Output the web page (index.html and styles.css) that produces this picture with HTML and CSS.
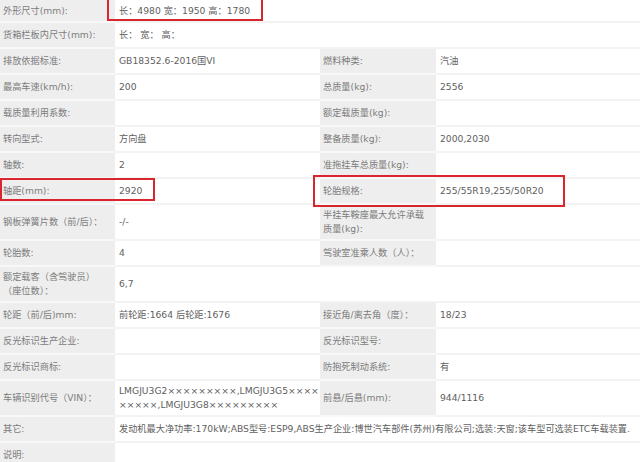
FILE: index.html
```html
<!DOCTYPE html>
<html lang="zh-CN">
<head>
  <meta charset="UTF-8">
  <meta name="viewport" content="width=device-width, initial-scale=1.0">
  <title>车辆参数</title>
  <link rel="stylesheet" href="styles.css">
</head>
<body>
  <div class="sheet">
    <table class="params">
      <colgroup>
        <col class="c-label"><col class="c-value"><col class="c-label2"><col class="c-value2">
      </colgroup>
      <tr class="first">
        <td class="label">外形尺寸(mm):</td>
        <td colspan="3">长：4980 宽：1950 高：1780</td>
      </tr>
      <tr>
        <td class="label">货箱栏板内尺寸(mm):</td>
        <td colspan="3">长： 宽： 高：</td>
      </tr>
      <tr>
        <td class="label">排放依据标准:</td>
        <td>GB18352.6-2016国VI</td>
        <td class="label">燃料种类:</td>
        <td>汽油</td>
      </tr>
      <tr>
        <td class="label">最高车速(km/h):</td>
        <td>200</td>
        <td class="label">总质量(kg):</td>
        <td>2556</td>
      </tr>
      <tr>
        <td class="label">载质量利用系数:</td>
        <td></td>
        <td class="label">额定载质量(kg):</td>
        <td></td>
      </tr>
      <tr>
        <td class="label">转向型式:</td>
        <td>方向盘</td>
        <td class="label">整备质量(kg):</td>
        <td>2000,2030</td>
      </tr>
      <tr>
        <td class="label">轴数:</td>
        <td>2</td>
        <td class="label">准拖挂车总质量(kg):</td>
        <td></td>
      </tr>
      <tr>
        <td class="label">轴距(mm):</td>
        <td>2920</td>
        <td class="label">轮胎规格:</td>
        <td>255/55R19,255/50R20</td>
      </tr>
      <tr class="tall">
        <td class="label">钢板弹簧片数（前/后）：</td>
        <td>-/-</td>
        <td class="label">半挂车鞍座最大允许承载质量(kg):</td>
        <td></td>
      </tr>
      <tr>
        <td class="label">轮胎数:</td>
        <td>4</td>
        <td class="label">驾驶室准乘人数（人）：</td>
        <td></td>
      </tr>
      <tr class="tall">
        <td class="label">额定载客（含驾驶员）<br>（座位数）：</td>
        <td colspan="3">6,7</td>
      </tr>
      <tr>
        <td class="label">轮距（前/后)mm:</td>
        <td>前轮距:1664 后轮距:1676</td>
        <td class="label">接近角/离去角（度）：</td>
        <td>18/23</td>
      </tr>
      <tr>
        <td class="label">反光标识生产企业:</td>
        <td></td>
        <td class="label">反光标识型号:</td>
        <td></td>
      </tr>
      <tr>
        <td class="label">反光标识商标:</td>
        <td></td>
        <td class="label">防抱死制动系统:</td>
        <td>有</td>
      </tr>
      <tr class="tall">
        <td class="label">车辆识别代号（VIN）：</td>
        <td class="nowrap">LMGJU3G2×××××××××,LMGJU3G5××××<br>×××××,LMGJU3G8×××××××××</td>
        <td class="label">前悬/后悬(mm):</td>
        <td>944/1116</td>
      </tr>
      <tr>
        <td class="label">其它:</td>
        <td colspan="3" class="nowrap">发动机最大净功率:170kW;ABS型号:ESP9,ABS生产企业:博世汽车部件(苏州)有限公司;选装:天窗;该车型可选装ETC车载装置.</td>
      </tr>
      <tr>
        <td class="label">说明:</td>
        <td colspan="3"></td>
      </tr>
    </table>

    <!-- red highlight boxes -->
    <div class="mark mark-size"></div>
    <div class="mark mark-wheelbase"></div>
    <div class="mark mark-tyre"></div>
  </div>
</body>
</html>
```

FILE: styles.css
```css
body {
  margin: 0;
  background: #fff;
  font-family: "DejaVu Sans", "Noto Sans CJK SC", sans-serif;
  font-size: 9.2px;
  color: #606060;
  overflow: hidden;
}
.sheet {
  position: relative;
  width: 640px;
}
.params {
  width: 640px;
  border-collapse: collapse;
  table-layout: fixed;
}
.c-label { width: 115px; }
.c-value { width: 205px; }
.c-label2 { width: 116px; }
.c-value2 { width: 204px; }
.params tr {
  height: 26px;
}
.params tr.first {
  height: 22px;
}
.params tr.tall {
  height: 36px;
}
.params td {
  padding: 0 4px;
  line-height: 14px;
  vertical-align: middle;
  border-bottom: 2px solid #f3f3f3;
  overflow: visible;
}
.params td.label {
  background: #eeeeee;
  color: #7c7c7c;
  padding-left: 3px;
  border-bottom-color: #f8f8f8;
}
.params td.label + td {
  padding-left: 4px;
}
.nowrap {
  white-space: nowrap;
}
.mark {
  position: absolute;
  border: 2px solid #d7262e;
}
.mark-size {
  left: 107px;
  top: -3px;
  width: 152px;
  height: 20px;
}
.mark-wheelbase {
  left: 0;
  top: 178px;
  width: 151px;
  height: 19px;
}
.mark-tyre {
  left: 313px;
  top: 175px;
  width: 248px;
  height: 28px;
}
```
